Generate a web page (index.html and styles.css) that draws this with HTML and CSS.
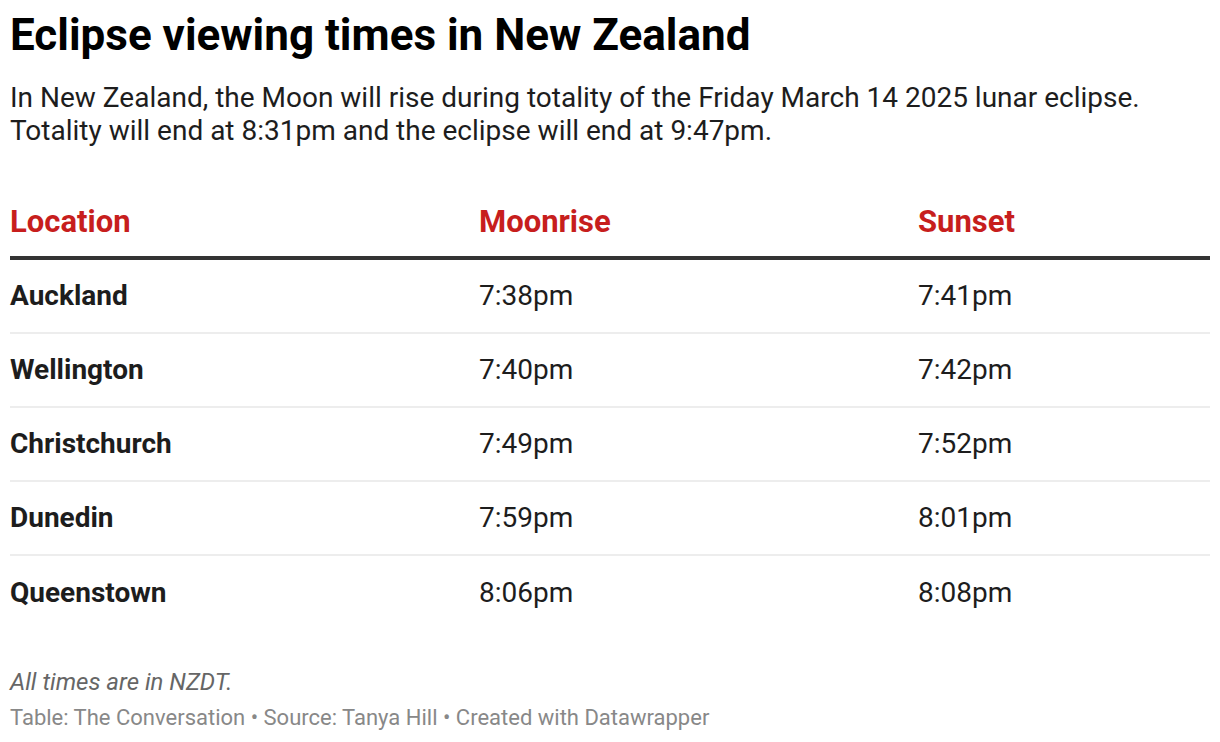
FILE: index.html
```html
<!DOCTYPE html>
<html>
<head>
<meta charset="utf-8">
<link rel="stylesheet" href="styles.css">
</head>
<body>
<div class="chart">
  <h1 class="title">Eclipse viewing times in New Zealand</h1>
  <p class="desc">In New Zealand, the Moon will rise during totality of the Friday March 14 2025 lunar eclipse. Totality will end at 8:31pm and the eclipse will end at 9:47pm.</p>
  <div class="table">
    <div class="row head">
      <div class="c1">Location</div>
      <div class="c2">Moonrise</div>
      <div class="c3">Sunset</div>
    </div>
    <div class="row">
      <div class="c1 loc">Auckland</div><div class="c2">7:38pm</div><div class="c3">7:41pm</div>
    </div>
    <div class="row">
      <div class="c1 loc">Wellington</div><div class="c2">7:40pm</div><div class="c3">7:42pm</div>
    </div>
    <div class="row">
      <div class="c1 loc">Christchurch</div><div class="c2">7:49pm</div><div class="c3">7:52pm</div>
    </div>
    <div class="row">
      <div class="c1 loc">Dunedin</div><div class="c2">7:59pm</div><div class="c3">8:01pm</div>
    </div>
    <div class="row last">
      <div class="c1 loc">Queenstown</div><div class="c2">8:06pm</div><div class="c3">8:08pm</div>
    </div>
  </div>
  <p class="notes">All times are in NZDT.</p>
  <p class="byline">Table: The Conversation • Source: Tanya Hill • Created with Datawrapper</p>
</div>
</body>
</html>
```
FILE: styles.css
```css
html, body {
  margin: 0;
  padding: 0;
  background: #fff;
}
body {
  font-family: Roboto, "Liberation Sans", sans-serif;
  color: #1d1d1d;
}
.chart {
  padding: 10px 10px 0 10px;
}
.title {
  margin: 0;
  font-size: 44px;
  font-weight: 700;
  line-height: 50px;
  color: #000;
}
.desc {
  margin: 21px 0 0 0;
  font-size: 28px;
  line-height: 33px;
  color: #1d1d1d;
}
.table {
  margin-top: 56px;
  display: flex;
  flex-direction: column;
}
.row {
  box-sizing: border-box;
  display: grid;
  grid-template-columns: 469px 439px 1fr;
  align-items: center;
  height: 74px;
  border-bottom: 2px solid #ededed;
  font-size: 28px;
  line-height: 34px;
}
.row.head {
  height: 57px;
  border-bottom: 4px solid #333;
  color: #c71e1d;
  font-weight: 700;
  font-size: 31px;
  line-height: 37px;
  align-items: start;
}
.row.last {
  border-bottom: none;
}
.loc {
  font-weight: 700;
}
.notes {
  margin: 37px 0 0 0;
  font-size: 24px;
  font-style: italic;
  color: #666;
  line-height: 30px;
}
.byline {
  margin: 7px 0 0 0;
  font-size: 22px;
  color: #888;
  line-height: 28px;
}
```
